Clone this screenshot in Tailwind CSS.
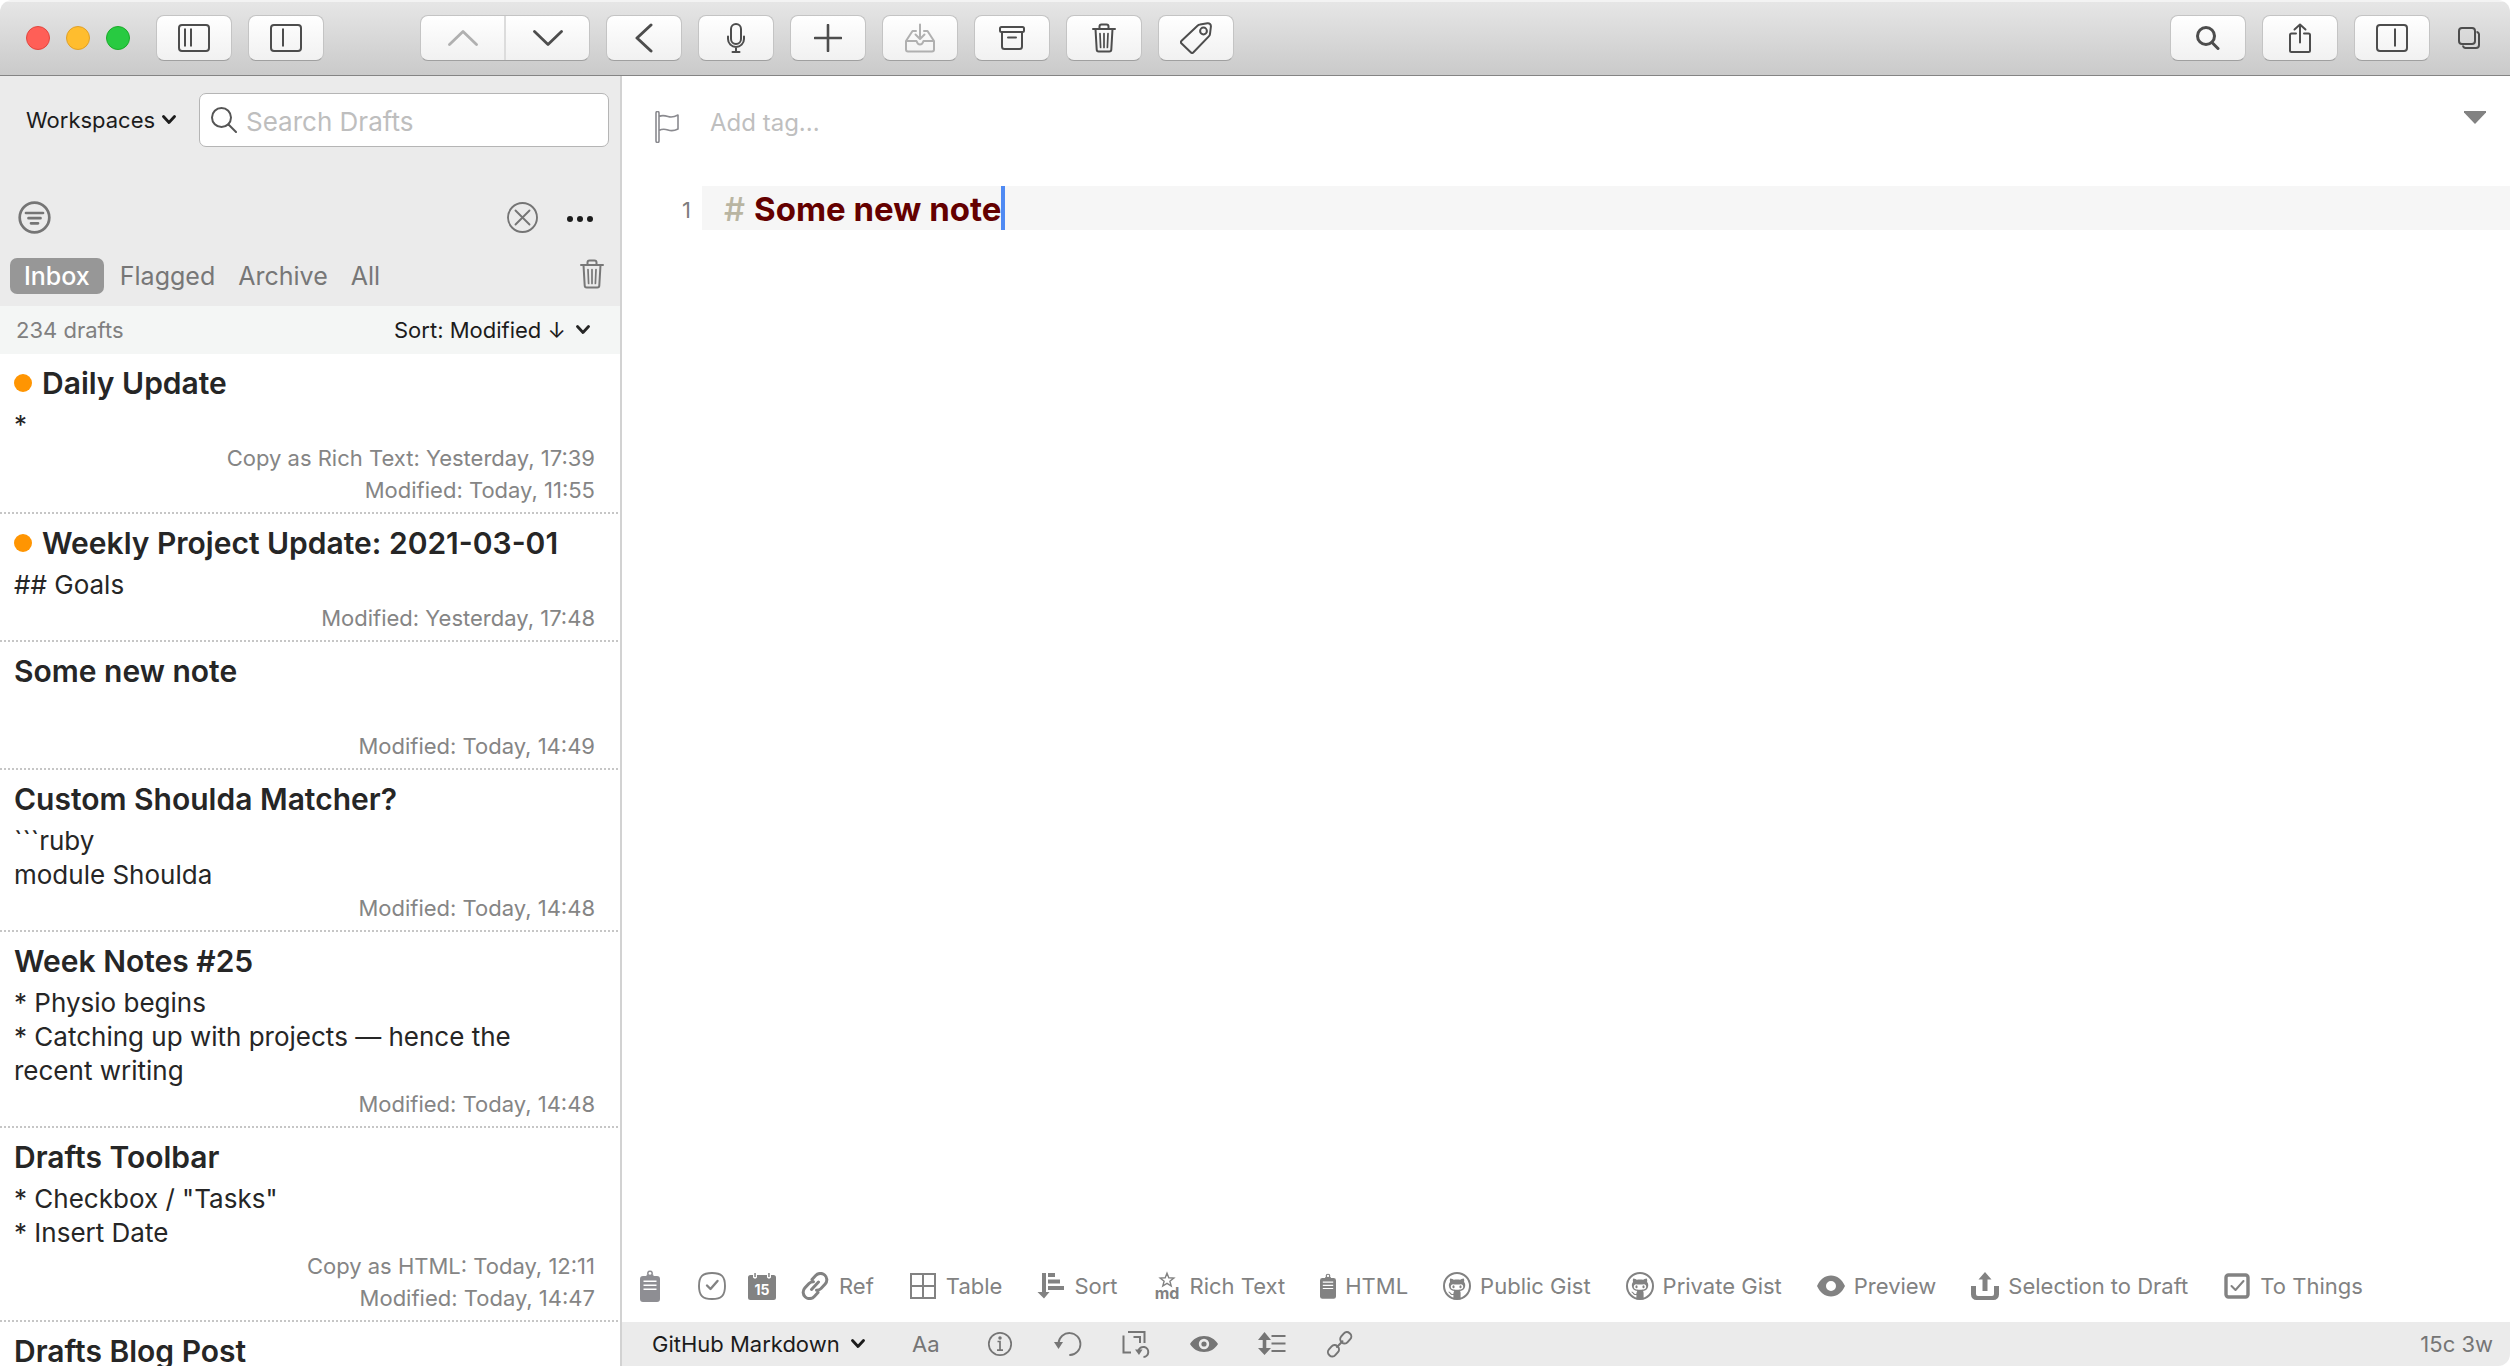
<!DOCTYPE html>
<html lang="en">
<head>
<meta charset="utf-8">
<title>Drafts</title>
<script src="https://cdn.jsdelivr.net/npm/@tailwindcss/browser@4"></script>
</head>
<body class="bg-white">
<svg class="hidden" aria-hidden="true">
  <symbol id="trash" viewBox="0 0 24 30"><g fill="none" stroke="currentColor" stroke-width="2" stroke-linecap="round" stroke-linejoin="round"><path d="M1 6h22M7.500 6V3.500a2 2 0 0 1 2-2h5a2 2 0 0 1 2 2V6M3.500 6l1.200 20.500a2 2 0 0 0 2 2h10.600a2 2 0 0 0 2-2L20.500 6"/><path stroke-width="1.700" d="M8 10.500l.6 14M12 10.500v14M16 10.500l-.6 14"/></g></symbol>
  <symbol id="chev" viewBox="0 0 14 10"><path d="M1.500 1.500L7 7.500l5.500-6" fill="none" stroke="currentColor" stroke-width="2.800" stroke-linecap="round" stroke-linejoin="round"/></symbol>
  <symbol id="clip" viewBox="0 0 20 32"><circle cx="10" cy="3.500" r="2.200" fill="none" stroke="currentColor" stroke-width="1.500"/><path fill="currentColor" fill-rule="evenodd" d="M3 6h3.500V4.800h7V6H17a3 3 0 0 1 3 3v20a3 3 0 0 1-3 3H3a3 3 0 0 1-3-3V9a3 3 0 0 1 3-3zm.5 4.500v1.400h13v-1.400zm0 4v1.400h13v-1.400zm0 4v1.400h13v-1.400z"/></symbol>
  <symbol id="octo" viewBox="0 0 28 28"><circle cx="14" cy="14" r="13" fill="none" stroke="currentColor" stroke-width="2"/><path fill="currentColor" fill-rule="evenodd" d="M7.200 6.500c1.800.1 3 .8 3.700 1.300 2-.5 4.200-.5 6.200 0 .7-.5 1.900-1.200 3.700-1.300.6 1.400.5 2.700.2 3.500 1 1.100 1.400 2.300 1.200 4-.3 3.200-2.200 4.700-5.200 5.100.4.500.6 1 .6 1.800v6.500h-7.200v-4.500c-2.200.4-3-.6-3.700-1.700-.4-.6-.9-1-1.500-1.300 1.200-.2 2 .3 2.600 1.200.7 1 1.500 1 2.600.7.100-1.200.3-2.100.8-2.700-3-.4-5-1.900-5.300-5.100-.2-1.700.3-2.900 1.200-4-.3-.8-.4-2.100.1-3.500zM10 12.200c-1.300 0-2.200.9-2.200 2.600 0 2.200 2 3 6.200 3s6.200-.8 6.200-3c0-1.700-.9-2.600-2.200-2.600-1.200 0-2.400.3-4 .3s-2.800-.3-4-.3z"/><ellipse cx="10.500" cy="14.700" rx="1.100" ry="1.500" fill="currentColor"/><ellipse cx="17.500" cy="14.700" rx="1.100" ry="1.500" fill="currentColor"/></symbol>
</svg>

<div class="flex h-screen flex-col overflow-hidden rounded-[12px] font-['Inter','Liberation_Sans',sans-serif] text-[22px] text-[#262626]">

  <header class="flex h-[76px] shrink-0 items-center border-t-2 border-b border-t-[#f3f3f3] border-b-[#848484] bg-linear-to-b from-[#e6e6e6] to-[#cacaca] pr-[30px] pb-[2px] pl-[26px] text-[#4d4d4d]">
    <div class="flex gap-4">
      <button aria-label="Close" class="size-6 rounded-full border border-[#e2463f] bg-[#ff5f57]"></button>
      <button aria-label="Minimize" class="size-6 rounded-full border border-[#e0a028] bg-[#ffbd2e]"></button>
      <button aria-label="Zoom" class="size-6 rounded-full border border-[#1aab29] bg-[#28ca41]"></button>
    </div>
    <div class="ml-[26px] flex gap-4">
      <button aria-label="Toggle draft list" class="flex h-[46px] w-[76px] items-center justify-center rounded-[8px] border border-[#c4c4c4] border-b-[#a0a0a0] bg-linear-to-b from-white to-[#f1f1f1]"><svg class="h-7 w-8" viewBox="0 0 32 28" fill="none" stroke="currentColor" stroke-width="2"><rect x="1" y="1" width="30" height="26" rx="3"/><path d="M7 4.500v18M13 4.500v18"/></svg></button>
      <button aria-label="Toggle sidebar" class="flex h-[46px] w-[76px] items-center justify-center rounded-[8px] border border-[#c4c4c4] border-b-[#a0a0a0] bg-linear-to-b from-white to-[#f1f1f1]"><svg class="h-7 w-8" viewBox="0 0 32 28" fill="none" stroke="currentColor" stroke-width="2"><rect x="1" y="1" width="30" height="26" rx="3"/><path d="M13 4.500v18"/></svg></button>
    </div>
    <div class="ml-24 flex gap-4">
      <div class="flex h-[46px] w-[170px] overflow-hidden rounded-[8px] border border-[#c4c4c4] border-b-[#a0a0a0] bg-linear-to-b from-white to-[#f1f1f1]">
        <button aria-label="Previous draft" class="flex flex-1 items-center justify-center border-r-2 border-[#dcdcdc] text-[#b0b0b0]"><svg class="h-4 w-[30px]" viewBox="0 0 30 16" fill="none" stroke="currentColor" stroke-width="2.800" stroke-linecap="round" stroke-linejoin="round"><path d="M1.500 14.500L15 1.500l13.500 13"/></svg></button>
        <button aria-label="Next draft" class="flex flex-1 items-center justify-center"><svg class="h-4 w-[30px]" viewBox="0 0 30 16" fill="none" stroke="currentColor" stroke-width="2.800" stroke-linecap="round" stroke-linejoin="round"><path d="M1.500 1.500L15 14.500l13.500-13"/></svg></button>
      </div>
      <button aria-label="Back" class="flex h-[46px] w-[76px] items-center justify-center rounded-[8px] border border-[#c4c4c4] border-b-[#a0a0a0] bg-linear-to-b from-white to-[#f1f1f1]"><svg class="h-[30px] w-[18px]" viewBox="0 0 18 30" fill="none" stroke="currentColor" stroke-width="3" stroke-linecap="round" stroke-linejoin="round"><path d="M16 2L2 15l14 13"/></svg></button>
      <button aria-label="Dictate" class="flex h-[46px] w-[76px] items-center justify-center rounded-[8px] border border-[#c4c4c4] border-b-[#a0a0a0] bg-linear-to-b from-white to-[#f1f1f1]"><svg class="h-[30px] w-[18px]" viewBox="0 0 18 30" fill="none" stroke="currentColor" stroke-width="2" stroke-linecap="round"><rect x="4" y="1" width="10" height="20" rx="5"/><path d="M1 13.500v2.500a8 8 0 0 0 16 0v-2.500M9 24v5M5.500 29h7"/></svg></button>
      <button aria-label="New draft" class="flex h-[46px] w-[76px] items-center justify-center rounded-[8px] border border-[#c4c4c4] border-b-[#a0a0a0] bg-linear-to-b from-white to-[#f1f1f1]"><svg class="size-7" viewBox="0 0 28 28" fill="none" stroke="currentColor" stroke-width="2.600" stroke-linecap="round"><path d="M14 1v26M1 14h26"/></svg></button>
      <button aria-label="Move to inbox" class="flex h-[46px] w-[76px] items-center justify-center rounded-[8px] border border-[#c4c4c4] border-b-[#a0a0a0] bg-linear-to-b from-white to-[#f1f1f1] text-[#b0b0b0]"><svg class="size-[30px]" viewBox="0 0 30 30" fill="none" stroke="currentColor" stroke-width="2" stroke-linecap="round" stroke-linejoin="round"><path d="M15 1.500v14M10.500 11.500l4.500 4.500 4.500-4.500M11 8H7.500L1 18v8.500A2 2 0 0 0 3 28.500h24a2 2 0 0 0 2-2V18L22.500 8H19M1 18h10.500c.6 2 1.700 3.500 3.500 3.500s2.900-1.500 3.500-3.500H29"/></svg></button>
      <button aria-label="Archive" class="flex h-[46px] w-[76px] items-center justify-center rounded-[8px] border border-[#c4c4c4] border-b-[#a0a0a0] bg-linear-to-b from-white to-[#f1f1f1]"><svg class="h-6 w-[26px]" viewBox="0 0 26 24" fill="none" stroke="currentColor" stroke-width="2" stroke-linejoin="round" stroke-linecap="round"><rect x="1" y="1" width="24" height="5" rx="1.500"/><path d="M3 6.500v14A2.500 2.500 0 0 0 5.500 23h15a2.500 2.500 0 0 0 2.500-2.500v-14M9 11.500h8"/></svg></button>
      <button aria-label="Trash" class="flex h-[46px] w-[76px] items-center justify-center rounded-[8px] border border-[#c4c4c4] border-b-[#a0a0a0] bg-linear-to-b from-white to-[#f1f1f1]"><svg class="h-[30px] w-6"><use href="#trash"/></svg></button>
      <button aria-label="Tags" class="flex h-[46px] w-[76px] items-center justify-center rounded-[8px] border border-[#c4c4c4] border-b-[#a0a0a0] bg-linear-to-b from-white to-[#f1f1f1]"><svg class="size-8" viewBox="0 0 32 32" fill="none" stroke="currentColor" stroke-width="2" stroke-linejoin="round"><path d="M20 2.500l7.500-1.300c2-.2 3.500 1.200 3.400 3.300L30 12a4 4 0 0 1-1.200 2.400L13.500 30.300a2 2 0 0 1-2.800 0L1.600 21.500a2 2 0 0 1 0-2.800L17.500 3.700A4.500 4.500 0 0 1 20 2.500z"/><circle cx="23.500" cy="9" r="3.400"/></svg></button>
    </div>
    <div class="ml-auto flex items-center gap-4">
      <button aria-label="Find" class="flex h-[46px] w-[76px] items-center justify-center rounded-[8px] border border-[#c4c4c4] border-b-[#a0a0a0] bg-linear-to-b from-white to-[#f1f1f1]"><svg class="size-6" viewBox="0 0 24 24" fill="none" stroke="currentColor" stroke-width="3" stroke-linecap="round"><circle cx="10" cy="10" r="8.500"/><path d="M16 16.500l6 6"/></svg></button>
      <button aria-label="Share" class="flex h-[46px] w-[76px] items-center justify-center rounded-[8px] border border-[#c4c4c4] border-b-[#a0a0a0] bg-linear-to-b from-white to-[#f1f1f1]"><svg class="h-[30px] w-[22px]" viewBox="0 0 22 30" fill="none" stroke="currentColor" stroke-width="2" stroke-linecap="round" stroke-linejoin="round"><path d="M7 10.500H2.500A1.500 1.500 0 0 0 1 12v15.500A1.500 1.500 0 0 0 2.500 29h17a1.500 1.500 0 0 0 1.500-1.500V12a1.500 1.500 0 0 0-1.500-1.500H15M11 19.500V1.500M5.500 6.500L11 1.500l5.500 5"/></svg></button>
      <button aria-label="Toggle actions" class="flex h-[46px] w-[76px] items-center justify-center rounded-[8px] border border-[#c4c4c4] border-b-[#a0a0a0] bg-linear-to-b from-white to-[#f1f1f1]"><svg class="h-7 w-8" viewBox="0 0 32 28" fill="none" stroke="currentColor" stroke-width="2"><rect x="1" y="1" width="30" height="26" rx="3"/><path d="M19 4.500v18"/></svg></button>
      <button aria-label="Windows" class="ml-3"><svg class="size-[22px]" viewBox="0 0 22 22" fill="none" stroke="currentColor" stroke-width="2"><rect x="1" y="1" width="16" height="16" rx="3"/><path d="M18.500 5a2.500 2.500 0 0 1 2.500 2.500v10.500a3 3 0 0 1-3 3H7.500A2.500 2.500 0 0 1 5 18.500"/></svg></button>
    </div>
  </header>

  <div class="flex min-h-0 flex-1">
    <aside class="flex w-[622px] shrink-0 flex-col border-r-2 border-[#d2d2d2]">
      <div class="bg-[#ebebeb] pt-[17px] pr-[11px] pb-3">
        <div class="flex h-[54px] items-center pl-[26px]">
          <select aria-label="Workspaces" class="appearance-none text-[#1c1c1c]"><option>Workspaces</option></select>
          <svg class="ml-[6px] h-[10px] w-[14px] text-[#1c1c1c]"><use href="#chev"/></svg>
          <label class="ml-auto flex h-[54px] w-[410px] items-center gap-[9px] rounded-[7px] border border-[#b5b5b5] bg-white pl-[11px]">
            <svg class="size-[26px] text-[#555]" viewBox="0 0 26 26" fill="none" stroke="currentColor" stroke-width="2" stroke-linecap="round"><circle cx="10.500" cy="10.500" r="9.500"/><path d="M17.500 17.500L25 25"/></svg>
            <input type="search" aria-label="Search Drafts" placeholder="Search Drafts" class="min-w-0 flex-1 pt-[2px] text-[26px] outline-none placeholder:text-[#bebebe]">
          </label>
        </div>
        <div class="mt-[53px] flex h-[34px] items-center pr-4 pl-[18px] text-[#757575]">
          <button aria-label="Filter"><svg class="size-[33px]" viewBox="0 0 33 33" fill="none" stroke="currentColor" stroke-width="2.700" stroke-linecap="round"><circle cx="16.500" cy="16.500" r="14.800"/><path d="M8 12h17M10.500 17.200h12M13 22.300h7"/></svg></button>
          <button aria-label="Clear" class="ml-auto"><svg class="size-[31px]" viewBox="0 0 31 31" fill="none" stroke="currentColor" stroke-width="1.900" stroke-linecap="round"><circle cx="15.500" cy="15.500" r="14.500"/><path d="M8.500 8.500l14 14M22.500 8.500l-14 14"/></svg></button>
          <button aria-label="More" class="ml-[29px] pt-1 text-[#1c1c1c]"><svg class="h-[6px] w-[26px]" viewBox="0 0 26 6" fill="currentColor"><circle cx="3" cy="3" r="3"/><circle cx="13" cy="3" r="3"/><circle cx="23" cy="3" r="3"/></svg></button>
        </div>
        <nav class="mt-6 flex h-9 items-center gap-[23px] pr-[5px] pl-[10px] text-[25px] text-[#777]">
          <a href="#" class="-mr-[7px] flex h-9 items-center rounded-[7px] bg-[#979797] px-[14px] pt-[2px] font-medium text-white">Inbox</a>
          <a href="#" class="pt-[2px]">Flagged</a>
          <a href="#" class="pt-[2px]">Archive</a>
          <a href="#" class="pt-[2px]">All</a>
          <button aria-label="Trash" class="ml-auto pb-1"><svg class="h-[30px] w-6"><use href="#trash"/></svg></button>
        </nav>
      </div>
      <div class="flex h-12 items-center bg-[#f4f6f5] pr-[30px] pl-4">
        <span class="text-[#808080]">234 drafts</span>
        <select aria-label="Sort order" class="ml-auto appearance-none text-[#1c1c1c]"><option>Sort: Modified ↓</option></select>
        <svg class="ml-[10px] h-[10px] w-[14px]"><use href="#chev"/></svg>
      </div>

      <ul class="min-h-0 flex-1 overflow-hidden pr-[2px] text-[26px] leading-[34px]">
        <li class="border-b-2 border-dotted border-[#c6c6c6] pt-3 pr-[23px] pb-[6px] pl-[14px]">
          <h2 class="flex items-center gap-[10px] text-[30px] leading-[34px] font-semibold"><span class="size-[18px] rounded-full bg-[#ff9502]"></span>Daily Update</h2>
          <p class="mt-2">*</p>
          <p class="text-right text-[22px] leading-8 text-[#858585]">Copy as Rich Text: Yesterday, 17:39<br>Modified: Today, 11:55</p>
        </li>
        <li class="border-b-2 border-dotted border-[#c6c6c6] pt-3 pr-[23px] pb-[6px] pl-[14px]">
          <h2 class="flex items-center gap-[10px] text-[30px] leading-[34px] font-semibold"><span class="size-[18px] rounded-full bg-[#ff9502]"></span>Weekly Project Update: 2021-03-01</h2>
          <p class="mt-2">## Goals</p>
          <p class="text-right text-[22px] leading-8 text-[#858585]">Modified: Yesterday, 17:48</p>
        </li>
        <li class="border-b-2 border-dotted border-[#c6c6c6] pt-3 pr-[23px] pb-[6px] pl-[14px]">
          <h2 class="text-[30px] leading-[34px] font-semibold">Some new note</h2>
          <p class="mt-2 h-[34px]"></p>
          <p class="text-right text-[22px] leading-8 text-[#858585]">Modified: Today, 14:49</p>
        </li>
        <li class="border-b-2 border-dotted border-[#c6c6c6] pt-3 pr-[23px] pb-[6px] pl-[14px]">
          <h2 class="text-[30px] leading-[34px] font-semibold">Custom Shoulda Matcher?</h2>
          <p class="mt-2">```ruby<br>module Shoulda</p>
          <p class="text-right text-[22px] leading-8 text-[#858585]">Modified: Today, 14:48</p>
        </li>
        <li class="border-b-2 border-dotted border-[#c6c6c6] pt-3 pr-[23px] pb-[6px] pl-[14px]">
          <h2 class="text-[30px] leading-[34px] font-semibold">Week Notes #25</h2>
          <p class="mt-2">* Physio begins<br>* Catching up with projects — hence the<br>recent writing</p>
          <p class="text-right text-[22px] leading-8 text-[#858585]">Modified: Today, 14:48</p>
        </li>
        <li class="border-b-2 border-dotted border-[#c6c6c6] pt-3 pr-[23px] pb-[6px] pl-[14px]">
          <h2 class="text-[30px] leading-[34px] font-semibold">Drafts Toolbar</h2>
          <p class="mt-2">* Checkbox / "Tasks"<br>* Insert Date</p>
          <p class="text-right text-[22px] leading-8 text-[#858585]">Copy as HTML: Today, 12:11<br>Modified: Today, 14:47</p>
        </li>
        <li class="border-b-2 border-dotted border-[#c6c6c6] pt-3 pr-[23px] pb-[6px] pl-[14px]">
          <h2 class="text-[30px] leading-[34px] font-semibold">Drafts Blog Post</h2>
        </li>
      </ul>
    </aside>

    <main class="flex min-w-0 flex-1 flex-col bg-white">
      <div class="flex h-[110px] shrink-0 items-start pr-6 pl-[33px]">
        <button aria-label="Flag" class="mt-[35px] text-[#8a8a8f]"><svg class="h-8 w-6" viewBox="0 0 24 32" fill="none" stroke="currentColor" stroke-width="1.600" stroke-linejoin="round"><path d="M1 2a1.500 1.500 0 0 1 3 0v28a1.500 1.500 0 0 1-3 0zM4 5.500c3-1.600 6-1 9 0s6 .6 10-1.500v14c-4 2-7 2-10 1s-6-1.200-9 .5"/></svg></button>
        <input aria-label="Add tag" placeholder="Add tag..." class="mt-[31px] ml-[31px] h-8 flex-1 text-[24px] outline-none placeholder:text-[#bfbfbf]">
        <button aria-label="Show tags" class="mt-[35px] text-[#828282]"><svg class="h-[13px] w-[22px]" viewBox="0 0 22 13" fill="currentColor"><path d="M0 0h22v1.500L11 13 0 1.500z"/></svg></button>
      </div>
      <div class="flex min-h-0 flex-1">
        <div class="w-[80px] shrink-0 pr-[11px] text-right leading-[48px] text-[#7d7d7d]">1</div>
        <div role="textbox" aria-label="Draft" class="flex-1 text-[33px] leading-[46px]">
          <p class="flex h-11 bg-[#f6f6f6] pl-[22px] font-bold text-[#640000]"><span class="mr-[9px] font-medium text-[#b9b5a2]">#</span>Some new note<span class="h-11 w-1 bg-[#4f8af3]"></span></p>
        </div>
      </div>

      <div class="flex h-[72px] shrink-0 items-center gap-[35px] pl-[18px] whitespace-nowrap text-[#828282]">
        <button aria-label="Clipboard"><svg class="h-8 w-5 text-[#8e8e93]"><use href="#clip"/></svg></button>
        <div class="ml-[3px] flex gap-[22px]">
          <button aria-label="Task"><svg class="size-7" viewBox="0 0 28 28" fill="none" stroke="currentColor" stroke-width="1.900" stroke-linecap="round" stroke-linejoin="round"><path d="M14 1C4.500 1 1 4.500 1 14s3.500 13 13 13 13-3.500 13-13S23.500 1 14 1z"/><path stroke-width="2.400" d="M9 13.500l3.500 3.500 7-8"/></svg></button>
          <button aria-label="Insert date"><svg class="size-7" viewBox="0 0 28 28"><path fill="currentColor" d="M2.500 3H5v2.500a2.300 2.300 0 0 0 4 0V3h10v2.500a2.300 2.300 0 0 0 4 0V3h2.500A2.500 2.500 0 0 1 28 5.500v20a2.500 2.500 0 0 1-2.500 2.500h-23A2.500 2.500 0 0 1 0 25.500v-20A2.500 2.500 0 0 1 2.500 3zM6.300 1h1.500v4H6.300zM20.200 1h1.500v4h-1.500z"/><text x="14" y="23" text-anchor="middle" font-size="14" font-weight="700" fill="#fff" class="font-['Inter',sans-serif]">15</text></svg></button>
        </div>
        <button class="-ml-[10px] flex items-center gap-[10px]"><svg class="size-7" viewBox="0 0 28 28" fill="none" stroke="currentColor" stroke-width="3" stroke-linecap="round" stroke-linejoin="round"><path d="M11 7.500l3.700-4a6.200 6.200 0 0 1 9.500 8.500L20 16.500a6.200 6.200 0 0 1-4.500 1.800M17 20.500l-3.700 4a6.200 6.200 0 0 1-9.500-8.500L8 11.500a6.200 6.200 0 0 1 4.500-1.800M10.500 17.500l7-7.500"/></svg>Ref</button>
        <button class="flex items-center gap-[9px]"><svg class="size-7" viewBox="0 0 28 28" fill="none" stroke="currentColor" stroke-width="2"><path d="M2 2h24v24H2zM14 2v24M2 14h24"/></svg>Table</button>
        <button class="flex items-center gap-[9px]"><svg class="size-7" viewBox="0 0 28 28" fill="currentColor"><path d="M5 1h4v19h3.500L7 26.500.5 20H5zM11 1h7v4h-7zM11 7.500h12v4H11zM11 14h16v4H11z"/></svg>Sort</button>
        <button class="flex items-center gap-[9px]"><svg class="size-7 overflow-visible" viewBox="0 0 28 28"><path fill="none" stroke="currentColor" stroke-width="1.400" d="M14 1.200l1.800 4.600 5 .3-3.900 3.100 1.300 4.800-4.200-2.700-4.200 2.700 1.300-4.800-3.900-3.100 5-.3z"/><text x="14" y="27" text-anchor="middle" font-size="16" font-weight="700" fill="currentColor" class="font-['Inter',sans-serif]">md</text></svg>Rich Text</button>
        <button class="flex items-center gap-[9px]"><svg class="h-[26px] w-4"><use href="#clip"/></svg>HTML</button>
        <button class="flex items-center gap-[9px]"><svg class="size-7"><use href="#octo"/></svg>Public Gist</button>
        <button class="flex items-center gap-[9px]"><svg class="size-7"><use href="#octo"/></svg>Private Gist</button>
        <button class="flex items-center gap-[9px]"><svg class="size-7" viewBox="0 0 28 28" fill="currentColor" fill-rule="evenodd"><path d="M14 3.500C20 3.500 25 7.500 28 14c-3 6.500-8 10.500-14 10.500S3 20.500 0 14C3 7.500 8 3.500 14 3.500zM14 9a5 5 0 1 0 0 10 5 5 0 0 0 0-10z"/></svg>Preview</button>
        <button class="flex items-center gap-[9px]"><svg class="size-7" viewBox="0 0 28 28" fill="currentColor"><path d="M14 0l6.500 7.500h-4V19h-5V7.500h-4zM0 14h5v8a2 2 0 0 0 2 2h14a2 2 0 0 0 2-2v-8h5v8.500a5.500 5.500 0 0 1-5.500 5.500h-17A5.500 5.500 0 0 1 0 22.500z"/></svg>Selection to Draft</button>
        <button class="flex items-center gap-[9px]"><svg class="size-7" viewBox="0 0 28 28" fill="none" stroke="currentColor" stroke-width="3.400" stroke-linejoin="round" stroke-linecap="round"><rect x="3" y="3" width="22" height="22" rx="2.500"/><path stroke-width="2" d="M8.500 14l4 4 8-9"/></svg>To Things</button>
      </div>

      <footer class="flex h-11 shrink-0 items-center bg-[#ebebeb] pr-[17px] pl-[30px] text-[#757575]">
        <select aria-label="Syntax" class="appearance-none text-[#1c1c1c]"><option>GitHub Markdown</option></select>
        <svg class="ml-[11px] h-[10px] w-[14px] text-[#1c1c1c]"><use href="#chev"/></svg>
        <div class="ml-[47px] flex items-center gap-10">
          <button class="w-[34px] text-left">Aa</button>
          <button aria-label="Info"><svg class="size-7" viewBox="0 0 28 28" fill="none" stroke="currentColor" stroke-width="1.700"><circle cx="14" cy="14" r="11.200"/><path d="M11.500 11.500H14V20M11 20.200h6"/><circle cx="14" cy="8" r=".9" fill="currentColor"/></svg></button>
          <button aria-label="Undo"><svg class="size-7" viewBox="0 0 28 28" fill="none" stroke="currentColor" stroke-width="1.800" stroke-linecap="round"><path d="M4.500 13a11 11 0 1 1 11.500 12"/><path fill="currentColor" stroke="none" d="M0 12h9l-4.500 7z"/></svg></button>
          <button aria-label="Version history"><svg class="size-7" viewBox="0 0 28 28" fill="none" stroke="currentColor" stroke-width="2"><path d="M6 2h16.500v11M1.500 5.500V22.500H9M11.500 7h6.500v6"/><path d="M16.500 20.500a5 5 0 1 1 5 6.500"/><path fill="currentColor" stroke="none" d="M13 19.500h7.500L17 25z"/></svg></button>
          <button aria-label="Preview"><svg class="size-7" viewBox="0 0 28 28" fill="currentColor" fill-rule="evenodd"><path d="M14 6c6 0 11 3 14 8-3 5-8 8-14 8S3 19 0 14C3 9 8 6 14 6zm0 2.800a5.200 5.200 0 1 0 0 10.400 5.200 5.200 0 0 0 0-10.400z"/><circle cx="14" cy="14" r="2.600"/></svg></button>
          <button aria-label="Line spacing"><svg class="size-7" viewBox="0 0 28 28" fill="currentColor"><path d="M6.500 2l6.500 8H8.300v8H13l-6.500 7L0 18h4.700v-8H0z"/><path d="M13.500 5h14v2h-14zM13.500 12.500h14v2h-14zM13.500 20h14v2h-14z"/></svg></button>
          <button aria-label="Link mode"><svg class="size-7" viewBox="0 0 28 28" fill="none" stroke="currentColor" stroke-width="2" stroke-linecap="round"><rect x="15.500" y="1.800" width="8.500" height="12" rx="4" transform="rotate(42 19.800 7.800)"/><rect x="3.200" y="14.800" width="8.500" height="12" rx="4" transform="rotate(42 7.500 20.800)"/><path d="M11 17l5.500-5.800"/></svg></button>
        </div>
        <span class="ml-auto">15c 3w</span>
      </footer>
    </main>
  </div>
</div>
</body>
</html>
